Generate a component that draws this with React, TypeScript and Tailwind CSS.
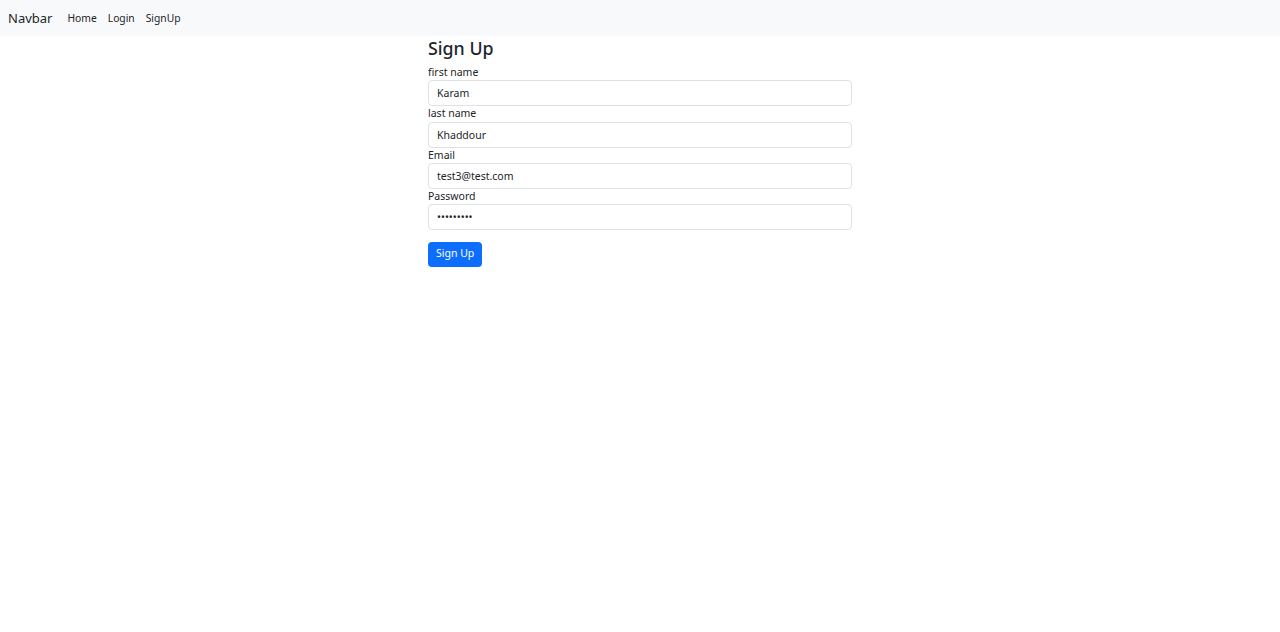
export default function App() {
  const font = { fontFamily: '"Noto Sans", "Open Sans", sans-serif' }
  return (
    <div className="min-h-screen bg-white text-[#212529]" style={font}>
      {/* Navbar */}
      <nav className="flex h-9 items-center bg-[#f8f9fa] px-2 pt-[1px]">
        <span className="mr-[15px] text-[13px]">Navbar</span>
        <div className="flex items-center gap-[11px] text-[10.3px]">
          <a href="#">Home</a>
          <a href="#">Login</a>
          <a href="#">SignUp</a>
        </div>
      </nav>

      {/* Form */}
      <div className="mx-auto w-[424px]">
        <h2 className="mb-[5px] text-[17.8px] font-medium leading-[24px]">Sign Up</h2>
        <form className="flex flex-col">
          {[
            ['first name', 'Karam', 'text'],
            ['last name', 'Khaddour', 'text'],
            ['Email', 'test3@test.com', 'email'],
            ['Password', 'secret123', 'password'],
          ].map(([label, value, type]) => (
            <div key={label} className="flex flex-col">
              <label className="text-[10.5px] leading-[15.3px]">{label}</label>
              <input
                type={type}
                defaultValue={value}
                className="h-[26px] rounded-[4px] border border-[#dee2e6] bg-white px-[8px] text-[10.5px] text-[#212529] outline-none"
              />
            </div>
          ))}
          <div className="mt-[9px]">
            <button
              type="button"
              className="h-[25px] rounded-[4px] bg-[#0d6efd] px-[8px] text-[10.5px] text-white"
            >
              Sign Up
            </button>
          </div>
        </form>
      </div>
    </div>
  )
}
